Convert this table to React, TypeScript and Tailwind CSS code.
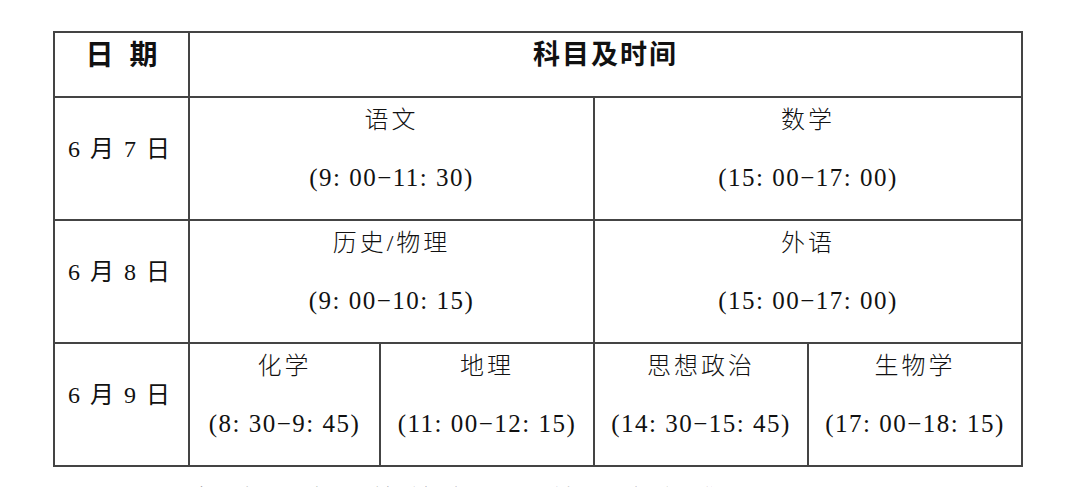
import React from "react"

const serif = "font-['Liberation_Serif','Noto_Sans_CJK_SC',serif]"
const sans = "font-['Noto_Sans_CJK_SC','Liberation_Sans',sans-serif]"

type Slot = { name: string; time: string; span?: number }

const days: { date: string; slots: Slot[] }[] = [
	{
		date: "6 月 7 日",
		slots: [
			{ name: "语文", time: "(9: 00−11: 30)", span: 2 },
			{ name: "数学", time: "(15: 00−17: 00)", span: 2 },
		],
	},
	{
		date: "6 月 8 日",
		slots: [
			{ name: "历史/物理", time: "(9: 00−10: 15)", span: 2 },
			{ name: "外语", time: "(15: 00−17: 00)", span: 2 },
		],
	},
	{
		date: "6 月 9 日",
		slots: [
			{ name: "化学", time: "(8: 30−9: 45)" },
			{ name: "地理", time: "(11: 00−12: 15)" },
			{ name: "思想政治", time: "(14: 30−15: 45)" },
			{ name: "生物学", time: "(17: 00−18: 15)" },
		],
	},
]

export default function App() {
	return (
		<div className="w-[1080px] h-[487px] overflow-hidden bg-white text-[#111]">
			<div className="pt-[31px] pl-[53px]">
				<table className="table-fixed border-collapse w-[968px]">
					<colgroup>
						<col className="w-[135px]" />
						<col className="w-[191px]" />
						<col className="w-[214px]" />
						<col className="w-[214px]" />
						<col className="w-[214px]" />
					</colgroup>
					<tbody>
						<tr className="h-[65px]">
							<td className={`border-2 border-[#444] align-top text-center pt-[4px] text-[28px] leading-8 font-bold ${sans}`}>
								<span className="mr-[16px]">日</span>期
							</td>
							<td
								colSpan={4}
								className={`border-2 border-[#444] align-top text-center pt-[4px] text-[27px] leading-8 font-bold tracking-[2px] ${sans}`}
							>
								科目及时间
							</td>
						</tr>
						{days.map((day) => (
							<tr key={day.date} className="h-[123px]">
								<td className={`border-2 border-[#444] align-top text-center pt-[35px] pr-[3px] text-[24px] leading-8 tracking-[2px] whitespace-pre ${serif}`}>
									{day.date}
								</td>
								{day.slots.map((s) => (
									<td
										key={s.name}
										colSpan={s.span ?? 1}
										className={`border-2 border-[#444] align-top text-center pt-[6px] ${serif}`}
									>
										<div className="text-[24px] leading-8 tracking-[3px] font-light">{s.name}</div>
										<div className="mt-[26px] text-[25px] leading-8 tracking-[1.5px] whitespace-pre">{s.time}</div>
									</td>
								))}
							</tr>
						))}
					</tbody>
				</table>
			</div>
			<p className={`mt-[16px] pl-[192px] text-[24px] leading-8 tracking-[12px] whitespace-nowrap font-light ${serif}`}>
				各科考试开始前十五分钟考生凭准考证进入考场
			</p>
		</div>
	)
}
